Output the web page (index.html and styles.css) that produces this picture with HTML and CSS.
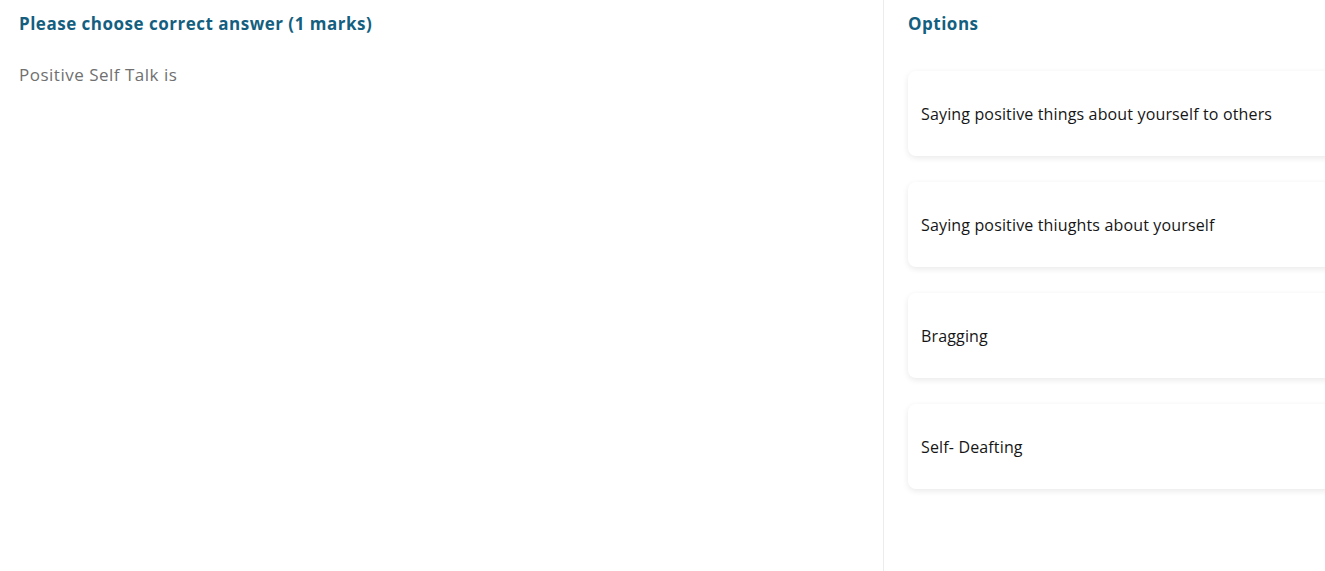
FILE: index.html
```html
<!doctype html>
<html lang="en">
<head>
  <meta charset="UTF-8">
  <title>Question</title>
  <link rel="stylesheet" href="styles.css">
</head>
<body>

  <div class="quiz">

    <div class="questionPane">
      <p class="paneTitle">Please choose correct answer (1 marks)</p>
      <p class="questionText">Positive Self Talk is</p>
    </div>

    <div class="optionsPane">
      <p class="paneTitle">Options</p>
      <div class="optionList">
        <div class="optionCard">Saying positive things about yourself to others</div>
        <div class="optionCard">Saying positive thiughts about yourself</div>
        <div class="optionCard">Bragging</div>
        <div class="optionCard">Self- Deafting</div>
      </div>
    </div>

  </div>

</body>
</html>
```

FILE: styles.css
```css
html, body {
  height: 100%;
  margin: 0px;
  padding: 0px;
  background: #ffffff;
  font-family: "Open Sans", "Noto Sans", sans-serif;
  overflow: hidden;
}

.quiz {
  display: flex;
  height: 100%;
}

.questionPane {
  width: 884px;
  flex: none;
  padding: 13px 19px;
  box-sizing: border-box;
  border-right: 1px solid #ececec;
}

.optionsPane {
  flex: none;
  width: 460px;
  padding: 13px 0 0 24px;
  box-sizing: border-box;
}

.paneTitle {
  margin: 0;
  color: #145f7f;
  font-size: 17px;
  font-weight: 700;
  letter-spacing: 0.5px;
  line-height: 22px;
}

.questionText {
  margin: 29px 0 0 0;
  color: #707070;
  font-size: 17px;
  letter-spacing: 0.5px;
  line-height: 22px;
}

.optionList {
  display: flex;
  flex-direction: column;
  gap: 26px;
  margin-top: 36px;
}

.optionCard {
  height: 85px;
  display: flex;
  align-items: center;
  padding: 0 13px;
  background: #ffffff;
  border-radius: 8px;
  box-shadow: 0 2px 6px rgba(0, 0, 0, 0.09);
  color: #161616;
  font-size: 16px;
  letter-spacing: 0.15px;
}
```
